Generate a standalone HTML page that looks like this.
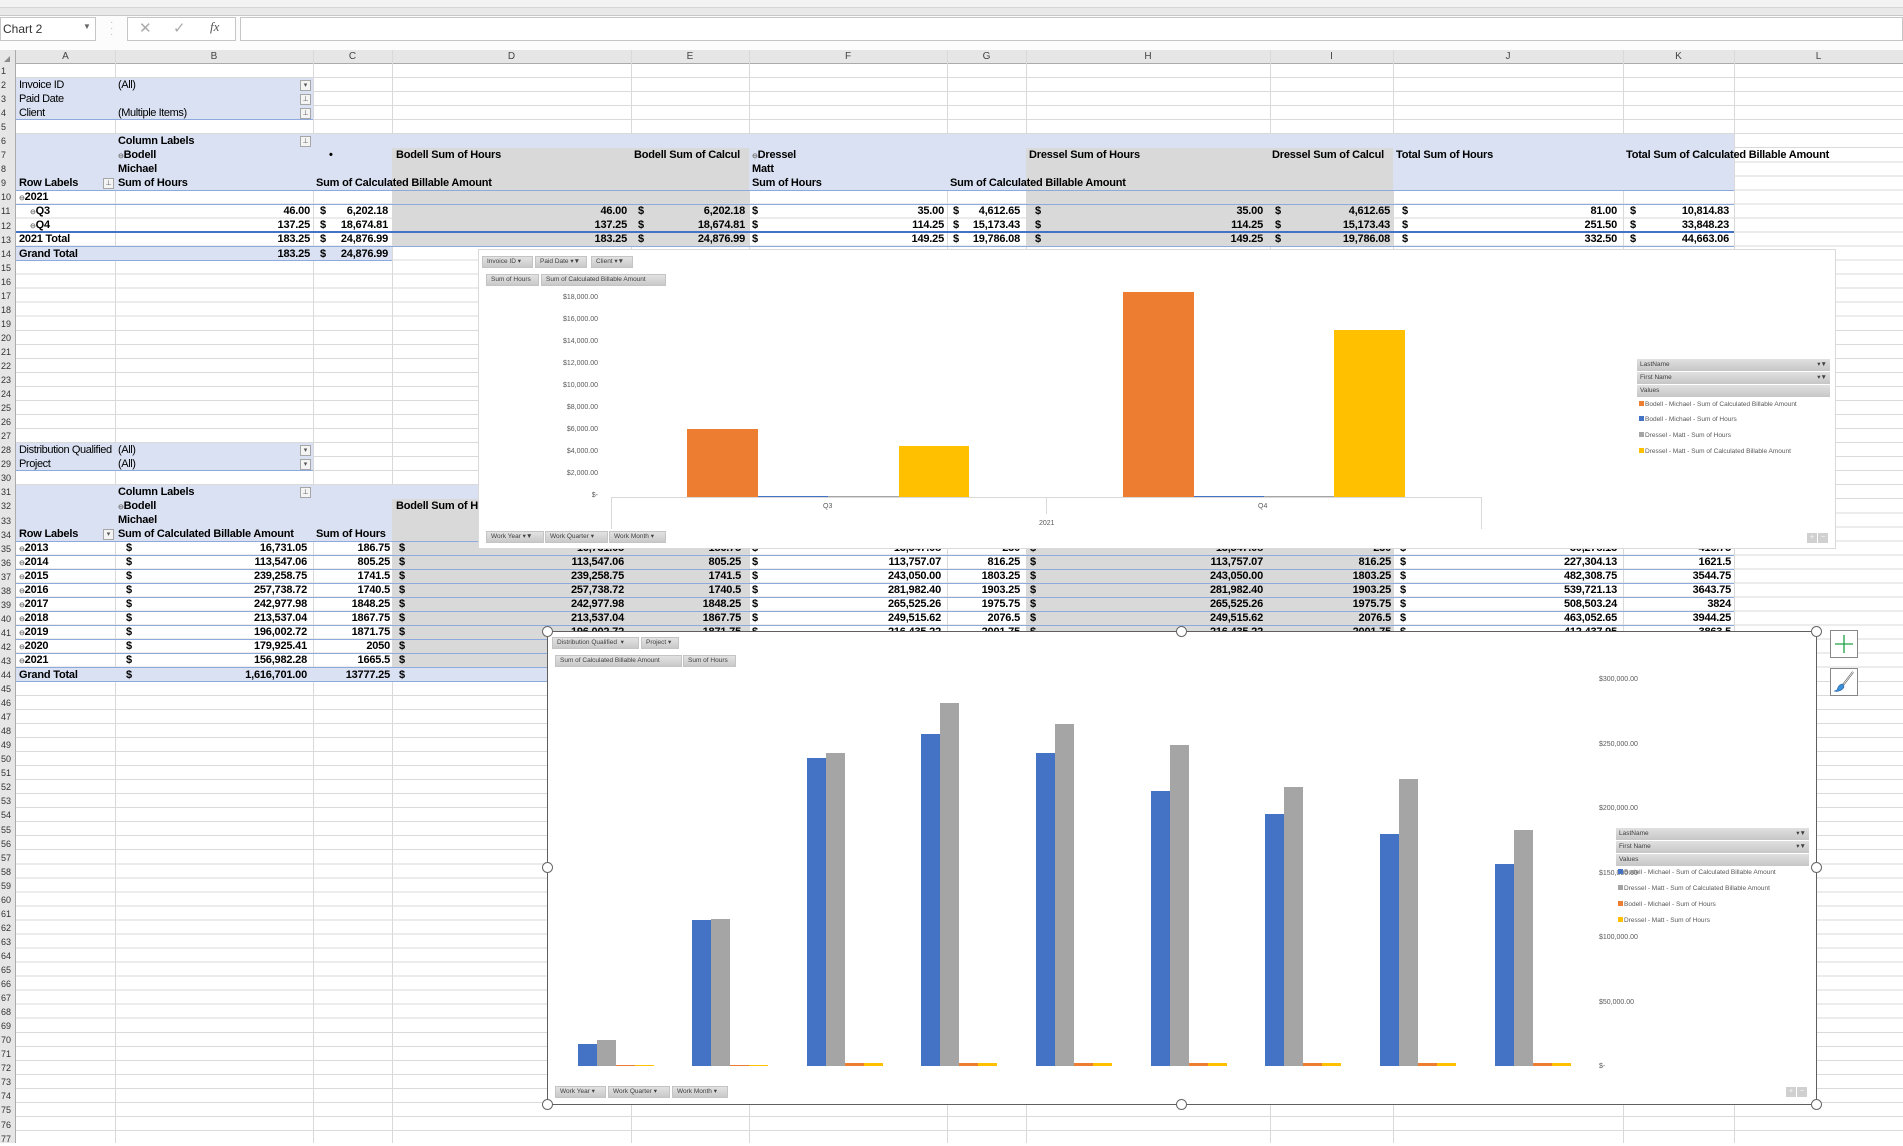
<!DOCTYPE html>
<html><head><meta charset="utf-8">
<style>
*{margin:0;padding:0;box-sizing:border-box}
body{width:1903px;height:1143px;position:relative;overflow:hidden;background:#fff;font-family:"Liberation Sans",sans-serif}
.a{position:absolute}
.t{position:absolute;height:14px;line-height:14px;white-space:nowrap;font-size:11px;letter-spacing:-0.4px;font-family:"Liberation Sans Narrow","Liberation Sans",sans-serif;color:#000}
.b{font-family:"Liberation Sans",sans-serif;font-weight:bold;font-size:11px;letter-spacing:-0.2px}
.vl{position:absolute;top:50px;width:1px;height:1093px;background:#d9d9d9}
.ch{position:absolute;top:50px;height:14px;line-height:14px;font-size:10px;color:#444;text-align:center}
.dd{position:absolute;width:11px;height:11px;border:1px solid #a6a6a6;background:#f4f4f4;font-size:7px;line-height:9px;text-align:center;color:#555}
.blue{position:absolute;background:#d9e1f2}
.gray{position:absolute;background:#d9d9d9}
.hl{position:absolute;height:1px;background:#8ea9db}
.btn{position:absolute;height:12px;background:linear-gradient(#e2e2e2,#c9c9c9);border:1px solid #c4c4c4;font-size:6.5px;line-height:10px;color:#404040;padding-left:4px;white-space:nowrap;font-family:"Liberation Sans Narrow","Liberation Sans",sans-serif}
.ax{position:absolute;font-size:7px;color:#595959;white-space:nowrap;font-family:"Liberation Sans Narrow","Liberation Sans",sans-serif}
.lg{position:absolute;height:12px;background:linear-gradient(#e0e0e0,#c6c6c6);font-size:6.5px;line-height:12px;color:#404040;padding-left:3px;font-family:"Liberation Sans Narrow","Liberation Sans",sans-serif}
.li{position:absolute;font-size:6.5px;color:#595959;white-space:nowrap;font-family:"Liberation Sans Narrow","Liberation Sans",sans-serif}
.li i{display:inline-block;width:5px;height:5px;margin-right:1px;vertical-align:0}
.hd{position:absolute;width:11px;height:11px;border-radius:50%;border:1.5px solid #666;background:#fff}
</style></head><body>
<div class="a" style="left:0;top:0;width:1903px;height:7px;background:#f3f3f3"></div>
<div class="a" style="left:0;top:7px;width:1903px;height:9px;background:#e9e9e9;border-top:1px solid #d6d6d6;border-bottom:1px solid #c8c8c8"></div>
<div class="a" style="left:0;top:16px;width:1903px;height:34px;background:#fcfcfc"></div>
<div class="a" style="left:0;top:17px;width:96px;height:24px;border:1px solid #c6c6c6;background:#fff;font-size:12px;line-height:22px;padding-left:2px;color:#333">Chart 2</div>
<div class="a" style="left:83px;top:22px;font-size:8px;color:#666">▼</div>
<div class="a" style="left:110px;top:20px;font-size:10px;color:#bbb;line-height:6px">·<br>·<br>·</div>
<div class="a" style="left:127px;top:17px;width:109px;height:24px;border:1px solid #c6c6c6;background:#fff"></div>
<div class="a" style="left:139px;top:19px;font-size:15px;color:#aaa">✕</div>
<div class="a" style="left:173px;top:19px;font-size:15px;color:#aaa">✓</div>
<div class="a" style="left:210px;top:19px;font-size:13px;color:#555;font-style:italic;font-family:'Liberation Serif',serif">fx</div>
<div class="a" style="left:240px;top:17px;width:1663px;height:24px;border:1px solid #c6c6c6;background:#fff"></div>
<div class="a" style="left:0;top:50px;width:1903px;height:14px;background:#e6e6e6;border-bottom:1px solid #ababab"></div>
<div class="a" style="left:0;top:50px;width:16px;height:1093px;background:#e6e6e6;border-right:1px solid #ababab"></div>
<div class="a" style="left:4px;top:56px;width:0;height:0;border-left:6px solid transparent;border-bottom:6px solid #8a8a8a"></div>
<div class="a" style="left:1px;top:64px;font-size:9px;line-height:14.04px;white-space:pre;color:#333">1
2
3
4
5
6
7
8
9
10
11
12
13
14
15
16
17
18
19
20
21
22
23
24
25
26
27
28
29
30
31
32
33
34
35
36
37
38
39
40
41
42
43
44
45
46
47
48
49
50
51
52
53
54
55
56
57
58
59
60
61
62
63
64
65
66
67
68
69
70
71
72
73
74
75
76
77</div>
<div class="a" style="left:16px;top:64px;width:1887px;height:1079px;background:repeating-linear-gradient(to bottom,transparent 0,transparent 13.04px,#dadada 13.04px,#dadada 14.04px)"></div>
<div class="vl" style="left:115px"></div><div class="vl" style="left:313px"></div><div class="vl" style="left:392px"></div><div class="vl" style="left:631px"></div><div class="vl" style="left:749px"></div><div class="vl" style="left:947px"></div><div class="vl" style="left:1026px"></div><div class="vl" style="left:1270px"></div><div class="vl" style="left:1393px"></div><div class="vl" style="left:1623px"></div><div class="vl" style="left:1734px"></div>
<div class="ch" style="left:16px;width:99px">A</div><div class="ch" style="left:115px;width:198px">B</div><div class="ch" style="left:313px;width:79px">C</div><div class="ch" style="left:392px;width:239px">D</div><div class="ch" style="left:631px;width:118px">E</div><div class="ch" style="left:749px;width:198px">F</div><div class="ch" style="left:947px;width:79px">G</div><div class="ch" style="left:1026px;width:244px">H</div><div class="ch" style="left:1270px;width:123px">I</div><div class="ch" style="left:1393px;width:230px">J</div><div class="ch" style="left:1623px;width:111px">K</div><div class="ch" style="left:1734px;width:169px">L</div>

<div class="blue" style="left:16px;top:78px;width:297px;height:42px"></div>
<div class="hl" style="left:16px;top:119px;width:297px"></div>
<div class="t" style="left:19px;top:78px">Invoice ID</div><div class="t" style="left:118px;top:78px">(All)</div>
<div class="t" style="left:19px;top:92px">Paid Date</div>
<div class="t" style="left:19px;top:106px">Client</div><div class="t" style="left:118px;top:106px">(Multiple Items)</div>
<div class="dd" style="left:300px;top:80px">▾</div><div class="dd" style="left:300px;top:94px">⊥</div><div class="dd" style="left:300px;top:108px">⊥</div>

<div class="blue" style="left:16px;top:134px;width:1718px;height:56px"></div>
<div class="gray" style="left:392px;top:148px;width:357px;height:98px"></div>
<div class="gray" style="left:1026px;top:148px;width:367px;height:98px"></div>
<div class="hl" style="left:16px;top:190px;width:1718px"></div>
<div class="hl" style="left:16px;top:204px;width:1718px"></div>
<div class="a" style="left:16px;top:231px;width:1718px;height:2px;background:#4472c4"></div>
<div class="hl" style="left:16px;top:246px;width:1718px"></div>
<div class="blue" style="left:16px;top:247px;width:376px;height:14px"></div>
<div class="hl" style="left:16px;top:260px;width:376px"></div>

<div class="t b" style="left:118px;top:134px">Column Labels</div><div class="dd" style="left:300px;top:136px">⊥</div>
<div class="t b" style="left:118px;top:148px"><span style="font-size:7px;color:#777">⊖</span>Bodell</div>
<div class="t b" style="left:329px;top:148px">•</div>
<div class="t b" style="left:396px;top:148px">Bodell Sum of Hours</div>
<div class="t b" style="left:634px;top:148px;width:115px;overflow:hidden">Bodell Sum of Calcul</div>
<div class="t b" style="left:752px;top:148px"><span style="font-size:7px;color:#777">⊖</span>Dressel</div>
<div class="t b" style="left:1029px;top:148px">Dressel Sum of Hours</div>
<div class="t b" style="left:1272px;top:148px;width:121px;overflow:hidden">Dressel Sum of Calcul</div>
<div class="t b" style="left:1396px;top:148px">Total Sum of Hours</div>
<div class="t b" style="left:1626px;top:148px">Total Sum of Calculated Billable Amount</div>
<div class="t b" style="left:118px;top:162px">Michael</div>
<div class="t b" style="left:752px;top:162px">Matt</div>
<div class="t b" style="left:19px;top:176px">Row Labels</div><div class="dd" style="left:103px;top:178px">⊥</div>
<div class="t b" style="left:118px;top:176px">Sum of Hours</div>
<div class="t b" style="left:316px;top:176px">Sum of Calculated Billable Amount</div>
<div class="t b" style="left:752px;top:176px">Sum of Hours</div>
<div class="t b" style="left:950px;top:176px">Sum of Calculated Billable Amount</div>
<div class="t b" style="left:19px;top:190px"><span style="font-size:7px;color:#777">⊖</span>2021</div>
<div class="t b" style="left:30px;top:204px"><span style="font-size:7px;color:#777">⊖</span>Q3</div>
<div class="t b" style="left:30px;top:218px"><span style="font-size:7px;color:#777">⊖</span>Q4</div>
<div class="t b" style="left:19px;top:232px">2021 Total</div>
<div class="t b" style="left:19px;top:247px">Grand Total</div>
<div class="t b" style="right:1593px;top:204px">46.00</div><div class="t b" style="left:320px;top:204px">$</div><div class="t b" style="right:1515px;top:204px">6,202.18</div>
<div class="t b" style="right:1276px;top:204px">46.00</div><div class="t b" style="left:638px;top:204px">$</div><div class="t b" style="right:1158px;top:204px">6,202.18</div>
<div class="t b" style="left:752px;top:204px">$</div><div class="t b" style="right:959px;top:204px">35.00</div>
<div class="t b" style="left:953px;top:204px">$</div><div class="t b" style="right:883px;top:204px">4,612.65</div>
<div class="t b" style="left:1035px;top:204px">$</div><div class="t b" style="right:640px;top:204px">35.00</div>
<div class="t b" style="left:1275px;top:204px">$</div><div class="t b" style="right:513px;top:204px">4,612.65</div>
<div class="t b" style="left:1402px;top:204px">$</div><div class="t b" style="right:286px;top:204px">81.00</div>
<div class="t b" style="left:1630px;top:204px">$</div><div class="t b" style="right:174px;top:204px">10,814.83</div>
<div class="t b" style="right:1593px;top:218px">137.25</div><div class="t b" style="left:320px;top:218px">$</div><div class="t b" style="right:1515px;top:218px">18,674.81</div>
<div class="t b" style="right:1276px;top:218px">137.25</div><div class="t b" style="left:638px;top:218px">$</div><div class="t b" style="right:1158px;top:218px">18,674.81</div>
<div class="t b" style="left:752px;top:218px">$</div><div class="t b" style="right:959px;top:218px">114.25</div>
<div class="t b" style="left:953px;top:218px">$</div><div class="t b" style="right:883px;top:218px">15,173.43</div>
<div class="t b" style="left:1035px;top:218px">$</div><div class="t b" style="right:640px;top:218px">114.25</div>
<div class="t b" style="left:1275px;top:218px">$</div><div class="t b" style="right:513px;top:218px">15,173.43</div>
<div class="t b" style="left:1402px;top:218px">$</div><div class="t b" style="right:286px;top:218px">251.50</div>
<div class="t b" style="left:1630px;top:218px">$</div><div class="t b" style="right:174px;top:218px">33,848.23</div>
<div class="t b" style="right:1593px;top:232px">183.25</div><div class="t b" style="left:320px;top:232px">$</div><div class="t b" style="right:1515px;top:232px">24,876.99</div>
<div class="t b" style="right:1276px;top:232px">183.25</div><div class="t b" style="left:638px;top:232px">$</div><div class="t b" style="right:1158px;top:232px">24,876.99</div>
<div class="t b" style="left:752px;top:232px">$</div><div class="t b" style="right:959px;top:232px">149.25</div>
<div class="t b" style="left:953px;top:232px">$</div><div class="t b" style="right:883px;top:232px">19,786.08</div>
<div class="t b" style="left:1035px;top:232px">$</div><div class="t b" style="right:640px;top:232px">149.25</div>
<div class="t b" style="left:1275px;top:232px">$</div><div class="t b" style="right:513px;top:232px">19,786.08</div>
<div class="t b" style="left:1402px;top:232px">$</div><div class="t b" style="right:286px;top:232px">332.50</div>
<div class="t b" style="left:1630px;top:232px">$</div><div class="t b" style="right:174px;top:232px">44,663.06</div>
<div class="t b" style="right:1593px;top:247px">183.25</div><div class="t b" style="left:320px;top:247px">$</div><div class="t b" style="right:1515px;top:247px">24,876.99</div>

<div class="blue" style="left:16px;top:443px;width:297px;height:28px"></div>
<div class="hl" style="left:16px;top:470px;width:297px"></div>
<div class="t" style="left:19px;top:443px">Distribution Qualified</div><div class="t" style="left:118px;top:443px">(All)</div>
<div class="t" style="left:19px;top:457px">Project</div><div class="t" style="left:118px;top:457px">(All)</div>
<div class="dd" style="left:300px;top:445px">▾</div><div class="dd" style="left:300px;top:459px">▾</div>

<div class="blue" style="left:16px;top:485px;width:1718px;height:56px"></div>
<div class="gray" style="left:392px;top:499px;width:357px;height:169px"></div>
<div class="gray" style="left:1026px;top:499px;width:367px;height:169px"></div>
<div class="blue" style="left:16px;top:668px;width:1718px;height:14px"></div>
<div class="hl" style="left:16px;top:541px;width:1718px"></div>
<div class="hl" style="left:16px;top:555px;width:1718px"></div>
<div class="hl" style="left:16px;top:569px;width:1718px"></div>
<div class="hl" style="left:16px;top:583px;width:1718px"></div>
<div class="hl" style="left:16px;top:597px;width:1718px"></div>
<div class="hl" style="left:16px;top:611px;width:1718px"></div>
<div class="hl" style="left:16px;top:625px;width:1718px"></div>
<div class="hl" style="left:16px;top:639px;width:1718px"></div>
<div class="hl" style="left:16px;top:653px;width:1718px"></div>
<div class="hl" style="left:16px;top:667px;width:1718px"></div>
<div class="hl" style="left:16px;top:681px;width:1718px"></div>

<div class="t b" style="left:118px;top:485px">Column Labels</div><div class="dd" style="left:300px;top:487px">⊥</div>
<div class="t b" style="left:118px;top:499px"><span style="font-size:7px;color:#777">⊖</span>Bodell</div>
<div class="t b" style="left:396px;top:499px">Bodell Sum of Hours</div>
<div class="t b" style="left:118px;top:513px">Michael</div>
<div class="t b" style="left:19px;top:527px">Row Labels</div><div class="dd" style="left:103px;top:529px">▾</div>
<div class="t b" style="left:118px;top:527px">Sum of Calculated Billable Amount</div>
<div class="t b" style="left:316px;top:527px">Sum of Hours</div>

<div class="t b" style="left:19px;top:541px"><span style="font-size:7px;color:#777">⊖</span>2013</div><div class="t b" style="left:126px;top:541px">$</div><div class="t b" style="right:1596px;top:541px">16,731.05</div><div class="t b" style="right:1513px;top:541px">186.75</div><div class="t b" style="left:399px;top:541px">$</div><div class="t b" style="right:1279px;top:541px">16,731.05</div><div class="t b" style="right:1162px;top:541px">186.75</div><div class="t b" style="left:752px;top:541px">$</div><div class="t b" style="right:962px;top:541px">13,547.08</div><div class="t b" style="right:883px;top:541px">230</div><div class="t b" style="left:1030px;top:541px">$</div><div class="t b" style="right:640px;top:541px">13,547.08</div><div class="t b" style="right:512px;top:541px">230</div><div class="t b" style="left:1400px;top:541px">$</div><div class="t b" style="right:286px;top:541px">30,278.13</div><div class="t b" style="right:172px;top:541px">416.75</div>

<div class="t b" style="left:19px;top:555px"><span style="font-size:7px;color:#777">⊖</span>2014</div><div class="t b" style="left:126px;top:555px">$</div><div class="t b" style="right:1596px;top:555px">113,547.06</div><div class="t b" style="right:1513px;top:555px">805.25</div><div class="t b" style="left:399px;top:555px">$</div><div class="t b" style="right:1279px;top:555px">113,547.06</div><div class="t b" style="right:1162px;top:555px">805.25</div><div class="t b" style="left:752px;top:555px">$</div><div class="t b" style="right:962px;top:555px">113,757.07</div><div class="t b" style="right:883px;top:555px">816.25</div><div class="t b" style="left:1030px;top:555px">$</div><div class="t b" style="right:640px;top:555px">113,757.07</div><div class="t b" style="right:512px;top:555px">816.25</div><div class="t b" style="left:1400px;top:555px">$</div><div class="t b" style="right:286px;top:555px">227,304.13</div><div class="t b" style="right:172px;top:555px">1621.5</div>

<div class="t b" style="left:19px;top:569px"><span style="font-size:7px;color:#777">⊖</span>2015</div><div class="t b" style="left:126px;top:569px">$</div><div class="t b" style="right:1596px;top:569px">239,258.75</div><div class="t b" style="right:1513px;top:569px">1741.5</div><div class="t b" style="left:399px;top:569px">$</div><div class="t b" style="right:1279px;top:569px">239,258.75</div><div class="t b" style="right:1162px;top:569px">1741.5</div><div class="t b" style="left:752px;top:569px">$</div><div class="t b" style="right:962px;top:569px">243,050.00</div><div class="t b" style="right:883px;top:569px">1803.25</div><div class="t b" style="left:1030px;top:569px">$</div><div class="t b" style="right:640px;top:569px">243,050.00</div><div class="t b" style="right:512px;top:569px">1803.25</div><div class="t b" style="left:1400px;top:569px">$</div><div class="t b" style="right:286px;top:569px">482,308.75</div><div class="t b" style="right:172px;top:569px">3544.75</div>

<div class="t b" style="left:19px;top:583px"><span style="font-size:7px;color:#777">⊖</span>2016</div><div class="t b" style="left:126px;top:583px">$</div><div class="t b" style="right:1596px;top:583px">257,738.72</div><div class="t b" style="right:1513px;top:583px">1740.5</div><div class="t b" style="left:399px;top:583px">$</div><div class="t b" style="right:1279px;top:583px">257,738.72</div><div class="t b" style="right:1162px;top:583px">1740.5</div><div class="t b" style="left:752px;top:583px">$</div><div class="t b" style="right:962px;top:583px">281,982.40</div><div class="t b" style="right:883px;top:583px">1903.25</div><div class="t b" style="left:1030px;top:583px">$</div><div class="t b" style="right:640px;top:583px">281,982.40</div><div class="t b" style="right:512px;top:583px">1903.25</div><div class="t b" style="left:1400px;top:583px">$</div><div class="t b" style="right:286px;top:583px">539,721.13</div><div class="t b" style="right:172px;top:583px">3643.75</div>

<div class="t b" style="left:19px;top:597px"><span style="font-size:7px;color:#777">⊖</span>2017</div><div class="t b" style="left:126px;top:597px">$</div><div class="t b" style="right:1596px;top:597px">242,977.98</div><div class="t b" style="right:1513px;top:597px">1848.25</div><div class="t b" style="left:399px;top:597px">$</div><div class="t b" style="right:1279px;top:597px">242,977.98</div><div class="t b" style="right:1162px;top:597px">1848.25</div><div class="t b" style="left:752px;top:597px">$</div><div class="t b" style="right:962px;top:597px">265,525.26</div><div class="t b" style="right:883px;top:597px">1975.75</div><div class="t b" style="left:1030px;top:597px">$</div><div class="t b" style="right:640px;top:597px">265,525.26</div><div class="t b" style="right:512px;top:597px">1975.75</div><div class="t b" style="left:1400px;top:597px">$</div><div class="t b" style="right:286px;top:597px">508,503.24</div><div class="t b" style="right:172px;top:597px">3824</div>

<div class="t b" style="left:19px;top:611px"><span style="font-size:7px;color:#777">⊖</span>2018</div><div class="t b" style="left:126px;top:611px">$</div><div class="t b" style="right:1596px;top:611px">213,537.04</div><div class="t b" style="right:1513px;top:611px">1867.75</div><div class="t b" style="left:399px;top:611px">$</div><div class="t b" style="right:1279px;top:611px">213,537.04</div><div class="t b" style="right:1162px;top:611px">1867.75</div><div class="t b" style="left:752px;top:611px">$</div><div class="t b" style="right:962px;top:611px">249,515.62</div><div class="t b" style="right:883px;top:611px">2076.5</div><div class="t b" style="left:1030px;top:611px">$</div><div class="t b" style="right:640px;top:611px">249,515.62</div><div class="t b" style="right:512px;top:611px">2076.5</div><div class="t b" style="left:1400px;top:611px">$</div><div class="t b" style="right:286px;top:611px">463,052.65</div><div class="t b" style="right:172px;top:611px">3944.25</div>

<div class="t b" style="left:19px;top:625px"><span style="font-size:7px;color:#777">⊖</span>2019</div><div class="t b" style="left:126px;top:625px">$</div><div class="t b" style="right:1596px;top:625px">196,002.72</div><div class="t b" style="right:1513px;top:625px">1871.75</div><div class="t b" style="left:399px;top:625px">$</div><div class="t b" style="right:1279px;top:625px">196,002.72</div><div class="t b" style="right:1162px;top:625px">1871.75</div><div class="t b" style="left:752px;top:625px">$</div><div class="t b" style="right:962px;top:625px">216,435.22</div><div class="t b" style="right:883px;top:625px">2001.75</div><div class="t b" style="left:1030px;top:625px">$</div><div class="t b" style="right:640px;top:625px">216,435.22</div><div class="t b" style="right:512px;top:625px">2001.75</div><div class="t b" style="left:1400px;top:625px">$</div><div class="t b" style="right:286px;top:625px">412,437.95</div><div class="t b" style="right:172px;top:625px">3863.5</div>

<div class="t b" style="left:19px;top:639px"><span style="font-size:7px;color:#777">⊖</span>2020</div><div class="t b" style="left:126px;top:639px">$</div><div class="t b" style="right:1596px;top:639px">179,925.41</div><div class="t b" style="right:1513px;top:639px">2050</div><div class="t b" style="left:399px;top:639px">$</div>
<div class="t b" style="left:19px;top:653px"><span style="font-size:7px;color:#777">⊖</span>2021</div><div class="t b" style="left:126px;top:653px">$</div><div class="t b" style="right:1596px;top:653px">156,982.28</div><div class="t b" style="right:1513px;top:653px">1665.5</div><div class="t b" style="left:399px;top:653px">$</div>
<div class="t b" style="left:19px;top:668px">Grand Total</div><div class="t b" style="left:126px;top:668px">$</div><div class="t b" style="right:1596px;top:668px">1,616,701.00</div><div class="t b" style="right:1513px;top:668px">13777.25</div><div class="t b" style="left:399px;top:668px">$</div>

<div class="a" style="left:478px;top:249px;width:1358px;height:300px;background:#fff;border:1px solid #d9d9d9">
 <div class="btn" style="left:3px;top:6px;width:51px">Invoice ID ▾</div>
 <div class="btn" style="left:56px;top:6px;width:52px">Paid Date ▾▼</div>
 <div class="btn" style="left:112px;top:6px;width:42px">Client ▾▼</div>
 <div class="btn" style="left:7px;top:24px;width:53px">Sum of Hours</div>
 <div class="btn" style="left:62px;top:24px;width:125px">Sum of Calculated Billable Amount</div>
 <div class="ax" style="right:1237px;top:44px">$18,000.00</div>
 <div class="ax" style="right:1237px;top:66px">$16,000.00</div>
 <div class="ax" style="right:1237px;top:88px">$14,000.00</div>
 <div class="ax" style="right:1237px;top:110px">$12,000.00</div>
 <div class="ax" style="right:1237px;top:132px">$10,000.00</div>
 <div class="ax" style="right:1237px;top:154px">$8,000.00</div>
 <div class="ax" style="right:1237px;top:176px">$6,000.00</div>
 <div class="ax" style="right:1237px;top:198px">$4,000.00</div>
 <div class="ax" style="right:1237px;top:220px">$2,000.00</div>
 <div class="ax" style="right:1237px;top:242px">$-</div>
 <div class="a" style="left:208px;top:179px;width:71px;height:68px;background:#ed7d31"></div>
 <div class="a" style="left:279px;top:246px;width:70px;height:1px;background:#4472c4"></div>
 <div class="a" style="left:349px;top:246px;width:71px;height:1px;background:#a5a5a5"></div>
 <div class="a" style="left:420px;top:196px;width:70px;height:51px;background:#ffc000"></div>
 <div class="a" style="left:644px;top:42px;width:71px;height:205px;background:#ed7d31"></div>
 <div class="a" style="left:715px;top:246px;width:70px;height:1px;background:#4472c4"></div>
 <div class="a" style="left:785px;top:246px;width:71px;height:1px;background:#a5a5a5"></div>
 <div class="a" style="left:855px;top:80px;width:71px;height:167px;background:#ffc000"></div>
 <div class="a" style="left:132px;top:247px;width:870px;height:1px;background:#d9d9d9"></div>
 <div class="a" style="left:132px;top:247px;width:1px;height:32px;background:#d9d9d9"></div>
 <div class="a" style="left:567px;top:247px;width:1px;height:17px;background:#d9d9d9"></div>
 <div class="a" style="left:1002px;top:247px;width:1px;height:32px;background:#d9d9d9"></div>
 <div class="ax" style="left:344px;top:253px">Q3</div>
 <div class="ax" style="left:779px;top:253px">Q4</div>
 <div class="ax" style="left:560px;top:270px">2021</div>
 <div class="btn" style="left:7px;top:281px;width:58px">Work Year ▾▼</div>
 <div class="btn" style="left:66px;top:281px;width:63px">Work Quarter ▾</div>
 <div class="btn" style="left:130px;top:281px;width:57px">Work Month ▾</div>
 <div class="lg" style="left:1158px;top:109px;width:193px">LastName<span style="float:right;margin-right:3px">▾▼</span></div>
 <div class="lg" style="left:1158px;top:122px;width:193px">First Name<span style="float:right;margin-right:3px">▾▼</span></div>
 <div class="lg" style="left:1158px;top:135px;width:193px">Values</div>
 <div class="li" style="left:1160px;top:151px"><i style="background:#ed7d31"></i>Bodell - Michael - Sum of Calculated Billable Amount</div>
 <div class="li" style="left:1160px;top:166px"><i style="background:#4472c4"></i>Bodell - Michael - Sum of Hours</div>
 <div class="li" style="left:1160px;top:182px"><i style="background:#a5a5a5"></i>Dressel - Matt - Sum of Hours</div>
 <div class="li" style="left:1160px;top:198px"><i style="background:#ffc000"></i>Dressel - Matt - Sum of Calculated Billable Amount</div>
 <div class="a" style="left:1328px;top:283px;width:10px;height:10px;background:#d0d0d0;font-size:7px;line-height:10px;text-align:center;color:#fff">+</div>
 <div class="a" style="left:1339px;top:283px;width:10px;height:10px;background:#d0d0d0;font-size:7px;line-height:10px;text-align:center;color:#fff">−</div>
</div>

<div class="a" style="left:547px;top:631px;width:1270px;height:474px;background:#fff;border:1.5px solid #5f5f5f">
 <div class="btn" style="left:4px;top:5px;width:87px">Distribution Qualified &nbsp;▾</div>
 <div class="btn" style="left:93px;top:5px;width:38px">Project ▾</div>
 <div class="btn" style="left:7px;top:23px;width:127px">Sum of Calculated Billable Amount</div>
 <div class="btn" style="left:135px;top:23px;width:53px">Sum of Hours</div>
 <div class="ax" style="left:1051px;top:44px">$300,000.00</div>
 <div class="ax" style="left:1051px;top:109px">$250,000.00</div>
 <div class="ax" style="left:1051px;top:173px">$200,000.00</div>
 <div class="ax" style="left:1051px;top:238px">$150,000.00</div>
 <div class="ax" style="left:1051px;top:302px">$100,000.00</div>
 <div class="ax" style="left:1051px;top:367px">$50,000.00</div>
 <div class="ax" style="left:1051px;top:431px">$-</div>
 <div class="a" style="left:30px;top:412px;width:19px;height:22px;background:#4472c4"></div><div class="a" style="left:49px;top:408px;width:19px;height:26px;background:#a5a5a5"></div><div class="a" style="left:68px;top:433px;width:19px;height:1px;background:#ed7d31"></div><div class="a" style="left:87px;top:433px;width:19px;height:1px;background:#ffc000"></div>
 <div class="a" style="left:144px;top:288px;width:19px;height:146px;background:#4472c4"></div><div class="a" style="left:163px;top:287px;width:19px;height:147px;background:#a5a5a5"></div><div class="a" style="left:182px;top:433px;width:19px;height:1px;background:#ed7d31"></div><div class="a" style="left:201px;top:433px;width:19px;height:1px;background:#ffc000"></div>
 <div class="a" style="left:259px;top:126px;width:19px;height:308px;background:#4472c4"></div><div class="a" style="left:278px;top:121px;width:19px;height:313px;background:#a5a5a5"></div><div class="a" style="left:297px;top:431px;width:19px;height:3px;background:#ed7d31"></div><div class="a" style="left:316px;top:431px;width:19px;height:3px;background:#ffc000"></div>
 <div class="a" style="left:373px;top:102px;width:19px;height:332px;background:#4472c4"></div><div class="a" style="left:392px;top:71px;width:19px;height:363px;background:#a5a5a5"></div><div class="a" style="left:411px;top:431px;width:19px;height:3px;background:#ed7d31"></div><div class="a" style="left:430px;top:431px;width:19px;height:3px;background:#ffc000"></div>
 <div class="a" style="left:488px;top:121px;width:19px;height:313px;background:#4472c4"></div><div class="a" style="left:507px;top:92px;width:19px;height:342px;background:#a5a5a5"></div><div class="a" style="left:526px;top:431px;width:19px;height:3px;background:#ed7d31"></div><div class="a" style="left:545px;top:431px;width:19px;height:3px;background:#ffc000"></div>
 <div class="a" style="left:603px;top:159px;width:19px;height:275px;background:#4472c4"></div><div class="a" style="left:622px;top:113px;width:19px;height:321px;background:#a5a5a5"></div><div class="a" style="left:641px;top:431px;width:19px;height:3px;background:#ed7d31"></div><div class="a" style="left:660px;top:431px;width:19px;height:3px;background:#ffc000"></div>
 <div class="a" style="left:717px;top:182px;width:19px;height:252px;background:#4472c4"></div><div class="a" style="left:736px;top:155px;width:19px;height:279px;background:#a5a5a5"></div><div class="a" style="left:755px;top:431px;width:19px;height:3px;background:#ed7d31"></div><div class="a" style="left:774px;top:431px;width:19px;height:3px;background:#ffc000"></div>
 <div class="a" style="left:832px;top:202px;width:19px;height:232px;background:#4472c4"></div><div class="a" style="left:851px;top:147px;width:19px;height:287px;background:#a5a5a5"></div><div class="a" style="left:870px;top:431px;width:19px;height:3px;background:#ed7d31"></div><div class="a" style="left:889px;top:431px;width:19px;height:3px;background:#ffc000"></div>
 <div class="a" style="left:947px;top:232px;width:19px;height:202px;background:#4472c4"></div><div class="a" style="left:966px;top:198px;width:19px;height:236px;background:#a5a5a5"></div><div class="a" style="left:985px;top:431px;width:19px;height:3px;background:#ed7d31"></div><div class="a" style="left:1004px;top:431px;width:19px;height:3px;background:#ffc000"></div>
 <div class="lg" style="left:1068px;top:196px;width:193px">LastName<span style="float:right;margin-right:3px">▾▼</span></div>
 <div class="lg" style="left:1068px;top:209px;width:193px">First Name<span style="float:right;margin-right:3px">▾▼</span></div>
 <div class="lg" style="left:1068px;top:222px;width:193px">Values</div>
 <div class="li" style="left:1070px;top:237px"><i style="background:#4472c4"></i>Bodell - Michael - Sum of Calculated Billable Amount</div>
 <div class="li" style="left:1070px;top:253px"><i style="background:#a5a5a5"></i>Dressel - Matt - Sum of Calculated Billable Amount</div>
 <div class="li" style="left:1070px;top:269px"><i style="background:#ed7d31"></i>Bodell - Michael - Sum of Hours</div>
 <div class="li" style="left:1070px;top:285px"><i style="background:#ffc000"></i>Dressel - Matt - Sum of Hours</div>
 <div class="btn" style="left:7px;top:454px;width:51px">Work Year ▾</div>
 <div class="btn" style="left:60px;top:454px;width:62px">Work Quarter ▾</div>
 <div class="btn" style="left:124px;top:454px;width:56px">Work Month ▾</div>
 <div class="a" style="left:1238px;top:455px;width:10px;height:10px;background:#d0d0d0;font-size:7px;line-height:10px;text-align:center;color:#fff">+</div>
 <div class="a" style="left:1249px;top:455px;width:10px;height:10px;background:#d0d0d0;font-size:7px;line-height:10px;text-align:center;color:#fff">−</div>
</div>
<div class="hd" style="left:542px;top:626px"></div><div class="hd" style="left:1176px;top:626px"></div><div class="hd" style="left:1811px;top:626px"></div>
<div class="hd" style="left:542px;top:862px"></div><div class="hd" style="left:1811px;top:862px"></div>
<div class="hd" style="left:542px;top:1099px"></div><div class="hd" style="left:1176px;top:1099px"></div><div class="hd" style="left:1811px;top:1099px"></div>
<div class="a" style="left:1830px;top:630px;width:28px;height:28px;border:1px solid #888;background:#fff">
 <svg width="26" height="26" viewBox="0 0 26 26"><path d="M13 4V22M4 13H22" stroke="#21a047" stroke-width="1.3"/></svg>
</div>
<div class="a" style="left:1830px;top:668px;width:28px;height:28px;border:1px solid #888;background:#fff">
 <svg width="26" height="26" viewBox="0 0 26 26"><path d="M22 3L12 16" stroke="#555" stroke-width="2"/><path d="M22 3L12 16" stroke="#fff" stroke-width="0.8"/><path d="M12 15C8 15 7 18 6 21C5 22 3 22 3 22C6 23 11 22 13 18Z" fill="#3b8ed8" stroke="#1f5fa0" stroke-width="0.6"/></svg>
</div>
</body></html>
